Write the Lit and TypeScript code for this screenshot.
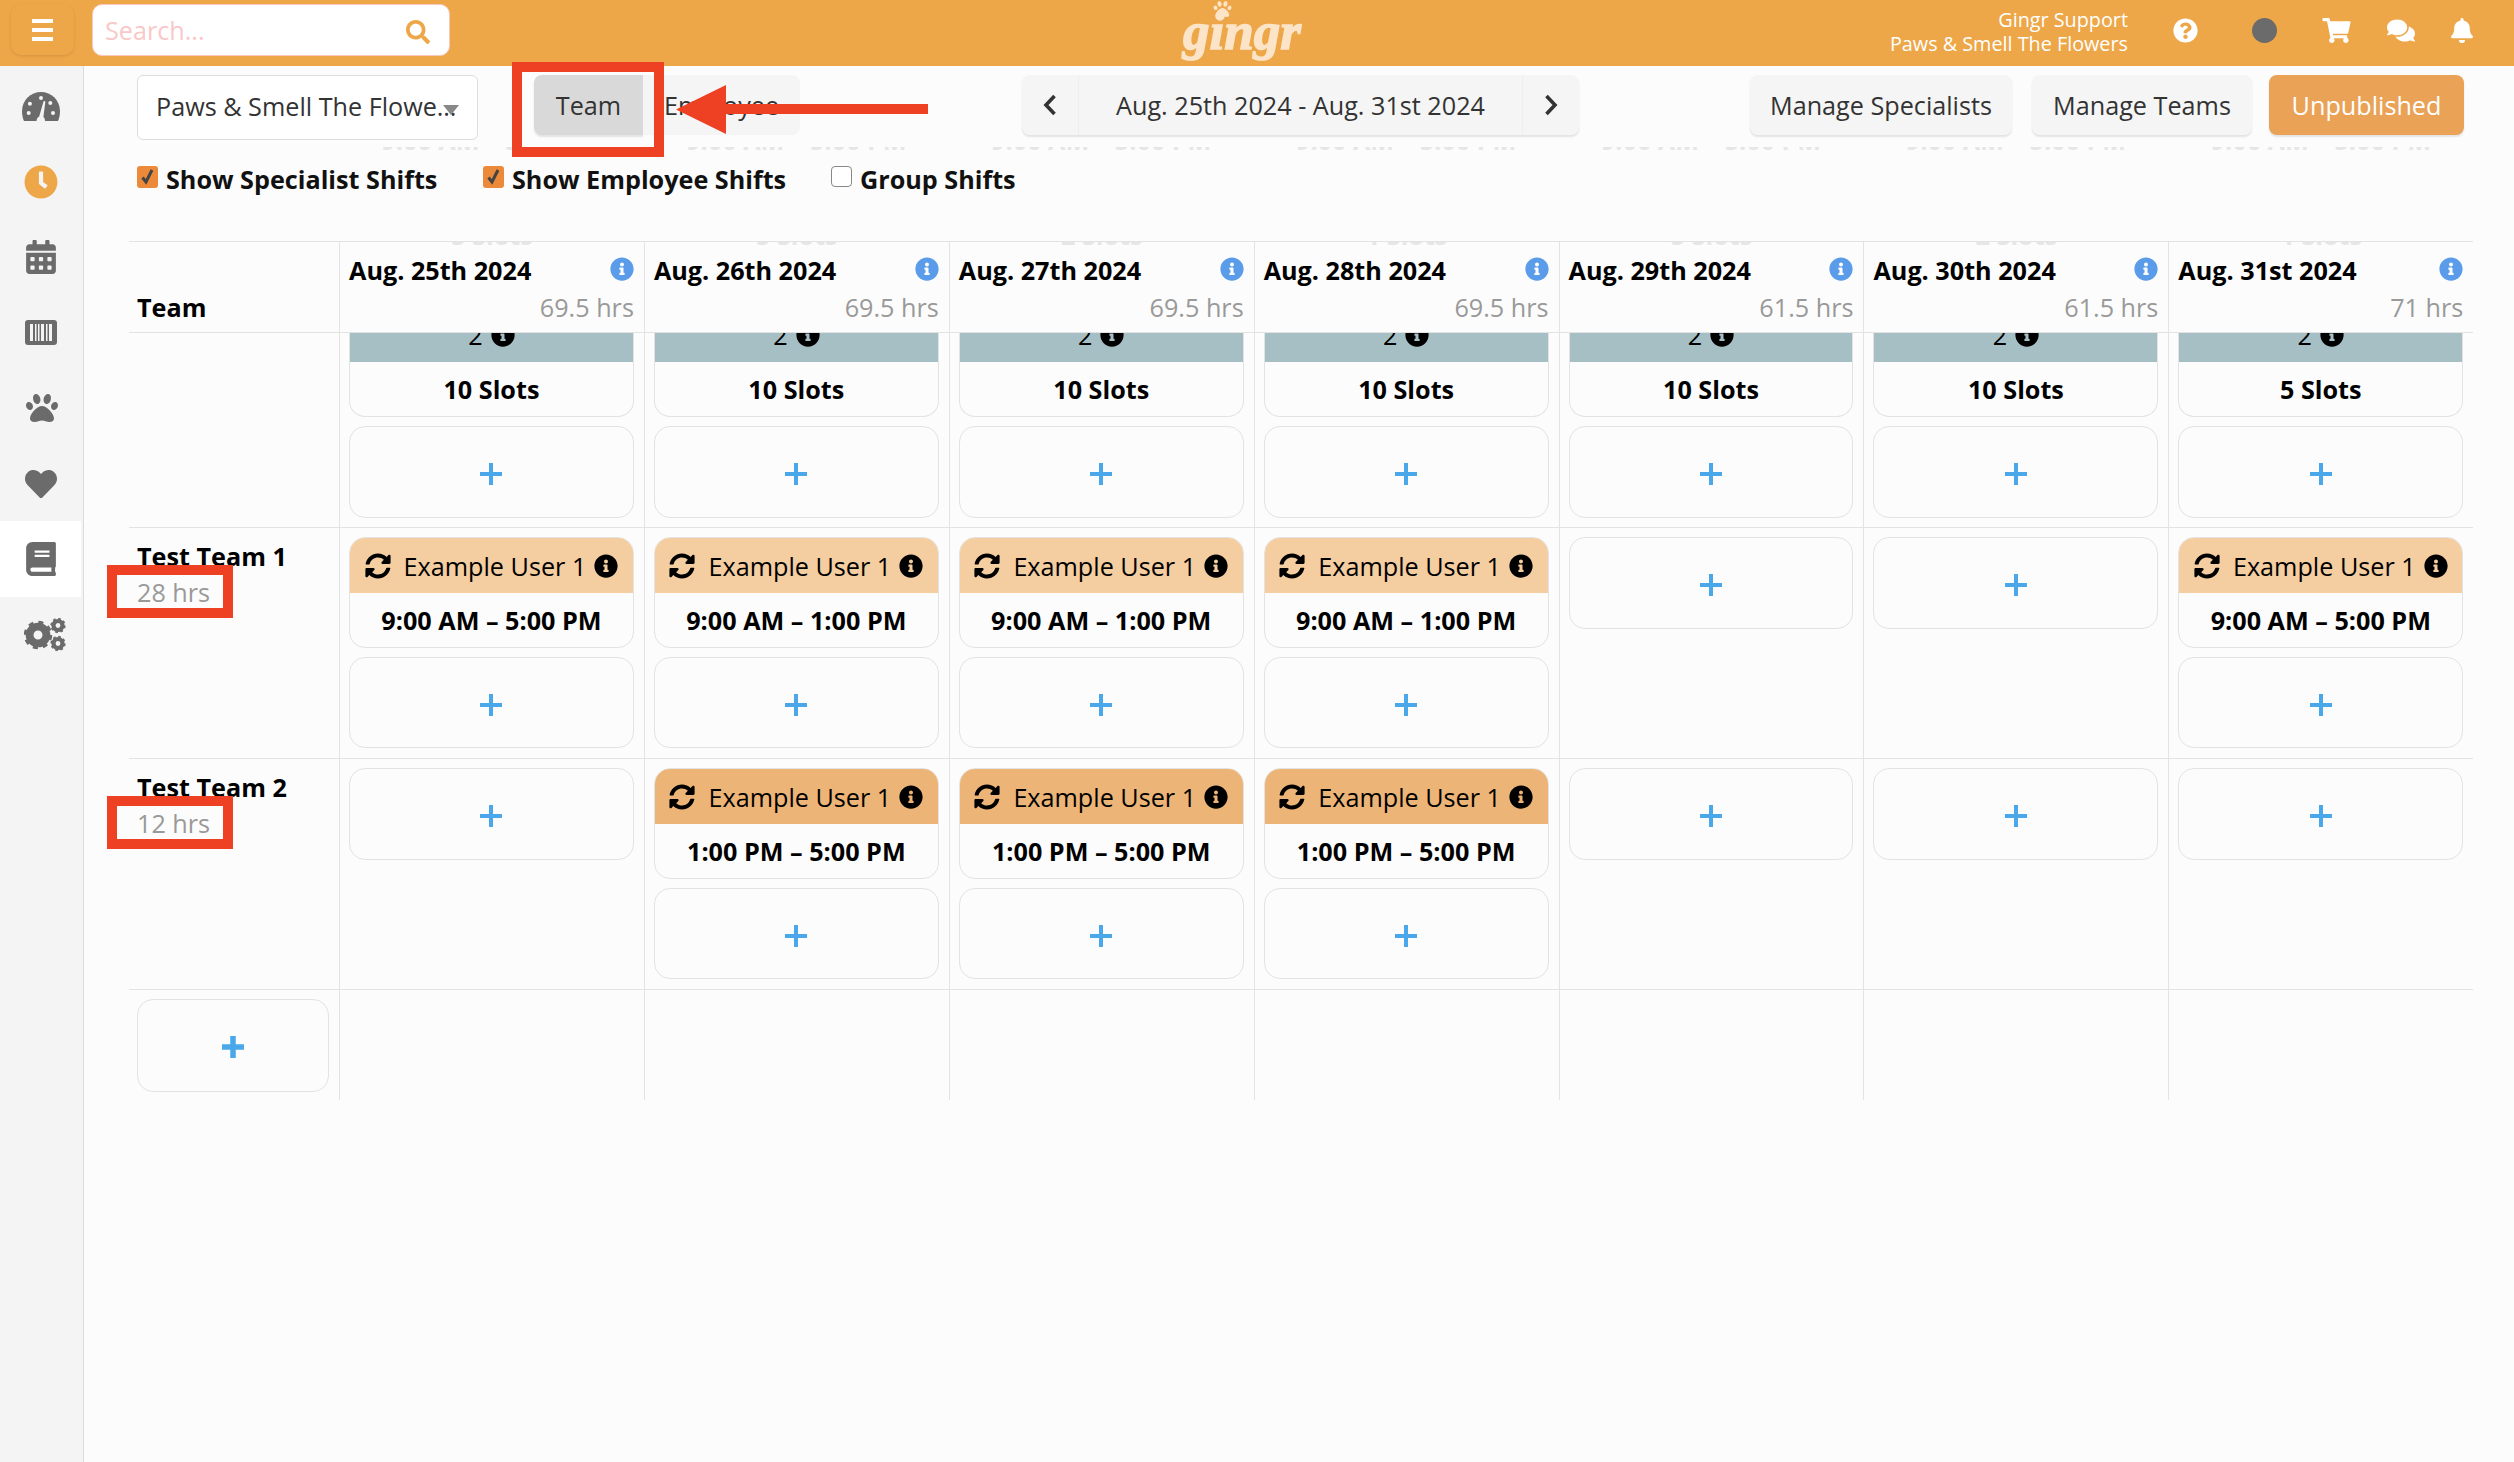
import { LitElement, html, css, svg } from 'lit';
import { customElement } from 'lit/decorators.js';

const icon = (vb: string, d: string, cls = '') =>
  html`<svg class="ic ${cls}" viewBox="${vb}" fill="currentColor"><path d="${d}"></path></svg>`;

const P = {
  sync: 'M370.72 133.28C339.458 104.008 298.888 87.962 255.848 88c-77.458.068-144.328 53.178-162.791 126.85-1.344 5.363-6.122 9.15-11.651 9.15H24.103c-7.498 0-13.194-6.807-11.807-14.176C33.933 94.924 134.813 8 256 8c66.448 0 126.791 26.136 171.315 68.685L463.03 40.97C478.149 25.851 504 36.559 504 57.941V192c0 13.255-10.745 24-24 24H345.941c-21.382 0-32.09-25.851-16.971-40.971l41.75-41.749zM32 296h134.059c21.382 0 32.09 25.851 16.971 40.971l-41.75 41.75c31.262 29.273 71.835 45.319 114.876 45.28 77.418-.07 144.315-53.144 162.787-126.849 1.344-5.363 6.122-9.15 11.651-9.15h57.304c7.498 0 13.194 6.807 11.807 14.176C478.067 417.076 377.187 504 256 504c-66.448 0-126.791-26.136-171.315-68.685L48.97 471.03C33.851 486.149 8 475.441 8 454.059V320c0-13.255 10.745-24 24-24z',
  info: 'M256 8C119.043 8 8 119.083 8 256c0 136.997 111.043 248 248 248s248-111.003 248-248C504 119.083 392.957 8 256 8zm0 110c23.196 0 42 18.804 42 42s-18.804 42-42 42-42-18.804-42-42 18.804-42 42-42zm56 254c0 6.627-5.373 12-12 12h-88c-6.627 0-12-5.373-12-12v-24c0-6.627 5.373-12 12-12h12v-64h-12c-6.627 0-12-5.373-12-12v-24c0-6.627 5.373-12 12-12h64c6.627 0 12 5.373 12 12v100h12c6.627 0 12 5.373 12 12v24z',
  question: 'M504 256c0 136.997-111.043 248-248 248S8 392.997 8 256C8 119.083 119.043 8 256 8s248 111.083 248 248zM262.655 90c-54.497 0-89.255 22.957-116.549 63.758-3.536 5.286-2.353 12.415 2.715 16.258l34.699 26.31c5.205 3.947 12.621 3.008 16.665-2.122 17.864-22.658 30.113-35.797 57.303-35.797 20.429 0 45.698 13.148 45.698 32.958 0 14.976-12.363 22.667-32.534 33.976C247.128 238.528 216 254.941 216 296v4c0 6.627 5.373 12 12 12h56c6.627 0 12-5.373 12-12v-1.333c0-28.462 83.186-29.647 83.186-106.667 0-58.002-60.165-102-116.531-102zM256 338c-25.365 0-46 20.635-46 46 0 25.364 20.635 46 46 46s46-20.636 46-46c0-25.365-20.635-46-46-46z',
  search: 'M505 442.7L405.3 343c-4.5-4.5-10.6-7-17-7H372c27.6-35.3 44-79.7 44-128C416 93.1 322.9 0 208 0S0 93.1 0 208s93.1 208 208 208c48.3 0 92.7-16.4 128-44v16.3c0 6.4 2.5 12.5 7 17l99.7 99.7c9.4 9.4 24.6 9.4 33.9 0l28.3-28.3c9.4-9.4 9.4-24.6.1-34zM208 336c-70.7 0-128-57.2-128-128 0-70.7 57.2-128 128-128 70.7 0 128 57.2 128 128 0 70.7-57.2 128-128 128z',
  cart: 'M528.12 301.319l47.273-208C578.806 78.301 567.391 64 551.99 64H159.208l-9.166-44.81C147.758 8.021 137.93 0 126.529 0H24C10.745 0 0 10.745 0 24v16c0 13.255 10.745 24 24 24h69.883l70.248 343.435C147.325 417.1 136 435.222 136 456c0 30.928 25.072 56 56 56s56-25.072 56-56c0-15.674-6.447-29.835-16.824-40h209.647C430.447 426.165 424 440.326 424 456c0 30.928 25.072 56 56 56s56-25.072 56-56c0-22.172-12.888-41.332-31.579-50.405l5.517-24.276c3.413-15.018-8.002-29.319-23.403-29.319H218.117l-6.545-32h293.145c11.206 0 20.92-7.754 23.403-18.681z',
  bell: 'M224 512c35.32 0 63.97-28.65 63.97-64H160.03c0 35.35 28.65 64 63.97 64zm215.39-149.71c-19.32-20.76-55.47-51.99-55.47-154.29 0-77.7-54.48-139.9-127.94-155.16V32c0-17.67-14.32-32-31.98-32s-31.98 14.33-31.98 32v20.84C118.56 68.1 64.08 130.3 64.08 208c0 102.3-36.15 133.53-55.47 154.29-6 6.45-8.66 14.16-8.61 21.71.11 16.4 12.98 32 32.1 32h383.8c19.12 0 32-15.6 32.1-32 .05-7.55-2.61-15.27-8.61-21.71z',
  comments: 'M416 192c0-88.4-93.1-160-208-160S0 103.6 0 192c0 34.3 14.1 65.9 38 92-13.4 30.2-35.5 54.2-35.8 54.5-2.2 2.3-2.8 5.7-1.5 8.7S4.8 352 8 352c36.6 0 66.9-12.3 88.7-25 32.2 15.7 70.3 25 111.3 25 114.9 0 208-71.6 208-160zm122 220c23.9-26 38-57.7 38-92 0-66.9-53.5-124.2-129.3-148.1.9 6.6 1.3 13.3 1.3 20.1 0 105.9-107.7 192-240 192-10.8 0-21.3-.8-31.7-1.9C207.8 439.6 281.8 480 368 480c41 0 79.1-9.2 111.3-25 21.8 12.7 52.1 25 88.7 25 3.2 0 6.1-1.9 7.3-4.8 1.3-2.9.7-6.3-1.5-8.7-.3-.3-22.4-24.2-35.8-54.5z',
  paw: 'M256 224c-79.41 0-192 122.76-192 200.25 0 34.9 26.81 55.75 71.74 55.75 48.84 0 81.09-25.08 120.26-25.08 39.51 0 71.85 25.08 120.26 25.08 44.93 0 71.74-20.85 71.74-55.75C448 346.76 335.41 224 256 224zm-147.28-12.61c-10.4-34.65-42.44-57.09-71.56-50.13-29.12 6.96-44.29 40.69-33.89 75.34 10.4 34.65 42.44 57.09 71.56 50.13 29.12-6.96 44.29-40.69 33.89-75.34zm84.72-20.78c30.94-8.14 46.42-49.94 34.58-93.36s-46.52-72.01-77.46-63.87-46.42 49.94-34.58 93.36c11.84 43.42 46.52 72.02 77.46 63.87zm281.39-29.34c-29.12-6.96-61.15 15.48-71.56 50.13-10.4 34.65 4.77 68.38 33.89 75.34 29.12 6.96 61.15-15.48 71.56-50.13 10.4-34.65-4.77-68.38-33.89-75.34zm-156.27 29.34c30.94 8.14 65.62-20.45 77.46-63.87 11.84-43.42-3.64-85.21-34.58-93.36s-65.62 20.45-77.46 63.87c-11.84 43.42 3.64 85.22 34.58 93.36z',
  heart: 'M462.3 62.6C407.5 15.9 326 24.3 275.7 76.2L256 96.5l-19.7-20.3C186.1 24.3 104.5 15.9 49.7 62.6c-62.8 53.6-66.1 149.8-9.9 207.9l193.5 199.8c12.5 12.9 32.8 12.9 45.3 0l193.5-199.8c56.3-58.1 53-154.3-9.8-207.9z',
  book: 'M448 360V24c0-13.3-10.7-24-24-24H96C43 0 0 43 0 96v320c0 53 43 96 96 96h328c13.3 0 24-10.7 24-24v-16c0-7.5-3.5-14.3-8.9-18.7-4.2-15.4-4.2-59.3 0-74.7 5.4-4.3 8.9-11.1 8.9-18.6zM128 134c0-3.3 2.7-6 6-6h212c3.3 0 6 2.7 6 6v20c0 3.3-2.7 6-6 6H134c-3.3 0-6-2.7-6-6v-20zm0 64c0-3.3 2.7-6 6-6h212c3.3 0 6 2.7 6 6v20c0 3.3-2.7 6-6 6H134c-3.3 0-6-2.7-6-6v-20zm253.4 250H96c-17.7 0-32-14.3-32-32 0-17.6 14.4-32 32-32h285.4c-1.9 17.1-1.9 46.9 0 64z',
  calendar: 'M0 464c0 26.5 21.5 48 48 48h352c26.5 0 48-21.5 48-48V192H0v272zm320-196c0-6.6 5.4-12 12-12h40c6.6 0 12 5.4 12 12v40c0 6.6-5.4 12-12 12h-40c-6.6 0-12-5.4-12-12v-40zm0 128c0-6.6 5.4-12 12-12h40c6.6 0 12 5.4 12 12v40c0 6.6-5.4 12-12 12h-40c-6.6 0-12-5.4-12-12v-40zM192 268c0-6.6 5.4-12 12-12h40c6.6 0 12 5.4 12 12v40c0 6.6-5.4 12-12 12h-40c-6.6 0-12-5.4-12-12v-40zm0 128c0-6.6 5.4-12 12-12h40c6.6 0 12 5.4 12 12v40c0 6.6-5.4 12-12 12h-40c-6.6 0-12-5.4-12-12v-40zM64 268c0-6.6 5.4-12 12-12h40c6.6 0 12 5.4 12 12v40c0 6.6-5.4 12-12 12H76c-6.6 0-12-5.4-12-12v-40zm0 128c0-6.6 5.4-12 12-12h40c6.6 0 12 5.4 12 12v40c0 6.6-5.4 12-12 12H76c-6.6 0-12-5.4-12-12v-40zM400 64h-48V16c0-8.8-7.2-16-16-16h-32c-8.8 0-16 7.2-16 16v48H160V16c0-8.8-7.2-16-16-16h-32c-8.8 0-16 7.2-16 16v48H48C21.5 64 0 85.5 0 112v48h448v-48c0-26.5-21.5-48-48-48z',
  clock: 'M256,8C119,8,8,119,8,256S119,504,256,504,504,393,504,256,393,8,256,8Zm92.49,313h0l-20,25a16,16,0,0,1-22.49,2.5h0l-67-49.72a40,40,0,0,1-15-31.23V112a16,16,0,0,1,16-16h32a16,16,0,0,1,16,16V256l58,42.5A16,16,0,0,1,348.49,321Z',
};

const gauge = html`<svg class="ic gauge" viewBox="0 0 38 29">
  <path fill="currentColor" d="M2 29C.6 26 0 22.5 0 19a19 19 0 0 1 38 0c0 3.5-.6 7-2 10z"></path>
  <g fill="#f4f4f4">
    <circle cx="6.7" cy="21" r="2"></circle><circle cx="7.9" cy="11.7" r="2"></circle>
    <circle cx="19" cy="6" r="2"></circle><circle cx="28.3" cy="11" r="2"></circle>
    <circle cx="31" cy="21" r="2"></circle>
    <path d="M14.5 29c.2-2 1-3.6 2.7-4.5L21.5 9.5c.3-1 2-.6 1.8.4l-1.9 15c1.2 1 1.6 2.500 1.6 4.100z"></path>
  </g>
</svg>`;

const barcode = html`<svg class="ic barcode" viewBox="0 0 32 25">
  <rect width="32" height="25" rx="3" fill="currentColor"></rect>
  <g fill="#f4f4f4">
    <rect x="5" y="4" width="3" height="17"></rect><rect x="10" y="4" width="1.500" height="17"></rect>
    <rect x="13" y="4" width="1.500" height="17"></rect><rect x="16" y="4" width="3" height="17"></rect>
    <rect x="21" y="4" width="1.500" height="17"></rect><rect x="24" y="4" width="3" height="17"></rect>
  </g>
</svg>`;

const gear = (x: number, y: number, r: number) => svg`
  <circle cx="${x}" cy="${y}" r="${r * 0.6}" fill="none" stroke="currentColor" stroke-width="${r * 0.56}"></circle>
  <circle cx="${x}" cy="${y}" r="${r * 0.88}" fill="none" stroke="currentColor" stroke-width="${r * 0.28}"
    stroke-dasharray="${(r * 0.88 * 2 * Math.PI) / 16} ${(r * 0.88 * 2 * Math.PI) / 16}"></circle>`;

const gears = html`<svg class="ic gears" viewBox="0 0 42 33">
  ${gear(14, 17, 14)} ${gear(34, 7.5, 7.5)} ${gear(34, 25.5, 7.5)}
</svg>`;

const plus = html`<svg class="plus" viewBox="0 0 22 22"><path d="M9 0h4v9h9v4h-9v9H9v-9H0V9h9z"></path></svg>`;
const chevLeft = html`<svg class="chev" viewBox="0 0 14 22"><path d="M11.500 2 3 11l8.500 9" fill="none" stroke="currentColor" stroke-width="3.600"></path></svg>`;
const chevRight = html`<svg class="chev" viewBox="0 0 14 22"><path d="M2.500 2 11 11l-8.500 9" fill="none" stroke="currentColor" stroke-width="3.600"></path></svg>`;
const check = html`<svg viewBox="0 0 21 22"><path d="M5.500 11.500 9 16l6-12" fill="none" stroke="#444" stroke-width="3"></path></svg>`;

const days = [
  { date: 'Aug. 25th 2024', hrs: '69.5 hrs', slots: '10 Slots', ghost: '5 Slots' },
  { date: 'Aug. 26th 2024', hrs: '69.5 hrs', slots: '10 Slots', ghost: '5 Slots' },
  { date: 'Aug. 27th 2024', hrs: '69.5 hrs', slots: '10 Slots', ghost: '2 Slots' },
  { date: 'Aug. 28th 2024', hrs: '69.5 hrs', slots: '10 Slots', ghost: '1 Slots' },
  { date: 'Aug. 29th 2024', hrs: '61.5 hrs', slots: '10 Slots', ghost: '5 Slots' },
  { date: 'Aug. 30th 2024', hrs: '61.5 hrs', slots: '10 Slots', ghost: '2 Slots' },
  { date: 'Aug. 31st 2024', hrs: '71 hrs', slots: '5 Slots', ghost: '1 Slots' },
];

const teams = [
  {
    name: 'Test Team 1',
    hrs: '28 hrs',
    tone: 'light',
    shifts: ['9:00 AM – 5:00 PM', '9:00 AM – 1:00 PM', '9:00 AM – 1:00 PM', '9:00 AM – 1:00 PM', '', '', '9:00 AM – 5:00 PM'],
  },
  {
    name: 'Test Team 2',
    hrs: '12 hrs',
    tone: 'dark',
    shifts: ['', '1:00 PM – 5:00 PM', '1:00 PM – 5:00 PM', '1:00 PM – 5:00 PM', '', '', ''],
  },
];

@customElement('app-root')
export class AppRoot extends LitElement {
  static styles = css`
    :host {
      display: block;
      position: relative;
      width: 2514px;
      height: 1462px;
      overflow: hidden;
      background: #fcfcfc;
      color: #333;
      font-family: 'Open Sans', sans-serif;
      font-size: 25.2px;
    }
    * {
      box-sizing: border-box;
    }
    .ic {
      display: block;
      flex: none;
    }

    .top {
      display: flex;
      align-items: center;
      height: 66px;
      background: #eea748;
      color: #fff;
    }
    .burger {
      display: flex;
      flex-direction: column;
      justify-content: center;
      gap: 5px;
      width: 63px;
      height: 51px;
      margin: -7px 0 0 11px;
      padding: 0 21px;
      border-radius: 10px;
      box-shadow: 0 1px 3px rgba(0, 0, 0, 0.12);
    }
    .burger i {
      display: block;
      height: 4px;
      background: #fff;
    }
    .search {
      display: flex;
      align-items: center;
      justify-content: space-between;
      width: 358px;
      height: 52px;
      margin: -6px 0 0 18px;
      padding: 0 19px 0 12px;
      background: #fff;
      border: 1px solid #f9c9bd;
      border-radius: 10px;
      color: #f9c8c8;
    }
    .search .ic {
      width: 24px;
      height: 24px;
      margin-top: 3px;
      color: #eea748;
    }
    .logo {
      position: relative;
      align-self: flex-start;
      width: 118px;
      margin-left: 733px;
      text-align: center;
      color: #fbe4c8;
      font-family: 'Liberation Serif', serif;
      font-style: italic;
      font-weight: 700;
      font-size: 53px;
      line-height: 62px;
      -webkit-text-stroke: 1.5px #fbe4c8;
      white-space: nowrap;
    }
    .logo .ic {
      position: absolute;
      left: 30px;
      top: 0;
      width: 19px;
      height: 18px;
    }
    .who {
      width: 300px;
      margin: -3px 0 0 527px;
      text-align: right;
      font-size: 19.8px;
      line-height: 24px;
    }
    .q {
      width: 25px;
      height: 25px;
      margin: -5px 0 0 45px;
    }
    .dot {
      width: 25px;
      height: 25px;
      margin: -5px 0 0 54px;
      border-radius: 50%;
      background: #6b6b6b;
    }
    .cart {
      width: 29px;
      height: 25px;
      margin: -5px 0 0 45px;
    }
    .chat {
      width: 28px;
      height: 25px;
      margin: -5px 0 0 36px;
    }
    .bell {
      width: 22px;
      height: 25px;
      margin: -5px 0 0 36px;
    }

    .body {
      display: flex;
      height: 1396px;
    }
    .side {
      flex: none;
      width: 84px;
      padding-top: 3px;
      background: #f4f4f4;
      border-right: 1px solid #dcdcdc;
      color: #6b6b6b;
    }
    .nav {
      display: flex;
      align-items: center;
      justify-content: center;
      width: 81px;
      height: 75.4px;
    }
    .nav.on {
      background: #fff;
    }
    .gauge {
      width: 38px;
      height: 29px;
    }
    .clock {
      width: 34px;
      height: 34px;
      color: #eea748;
    }
    .cal {
      width: 30px;
      height: 34px;
    }
    .barcode {
      width: 32px;
      height: 25px;
    }
    .paw {
      width: 34px;
      height: 32px;
      margin-left: 3px;
    }
    .heart {
      width: 34px;
      height: 32px;
    }
    .book {
      width: 30px;
      height: 34px;
    }
    .gears {
      width: 42px;
      height: 33px;
      margin-left: 9px;
    }

    .main {
      flex: 1;
      min-width: 0;
      padding: 9px 0 0 45px;
    }
    .bar {
      display: flex;
      align-items: flex-start;
      height: 60px;
      padding-left: 8px;
    }
    .select {
      display: flex;
      align-items: center;
      width: 341px;
      height: 65px;
      padding: 0 0 3px 18px;
      background: #fff;
      border: 1px solid #ddd;
      border-radius: 6px;
    }
    .select span {
      width: 302px;
      overflow: hidden;
      white-space: nowrap;
      text-overflow: ellipsis;
    }
    .select i {
      flex: none;
      width: 0;
      height: 0;
      margin-left: -15px;
      margin-top: 8px;
      border-left: 8px solid transparent;
      border-right: 8px solid transparent;
      border-top: 10px solid #888;
    }
    .btn {
      display: flex;
      align-items: center;
      justify-content: center;
      height: 60px;
      background: #f5f5f5;
      border-radius: 8px;
      box-shadow: 0 2px 2px rgba(0, 0, 0, 0.1);
      white-space: nowrap;
    }
    .seg1 {
      width: 109px;
      margin-left: 56px;
      background: #d9d9d9;
      border-radius: 8px 0 0 8px;
    }
    .seg2 {
      width: 157px;
      border-radius: 0 8px 8px 0;
      box-shadow: none;
    }
    .dates {
      display: flex;
      width: 557px;
      height: 60px;
      margin-left: 222px;
      background: #f5f5f5;
      border-radius: 8px;
      box-shadow: 0 2px 2px rgba(0, 0, 0, 0.1);
    }
    .dates .arrow {
      display: flex;
      align-items: center;
      justify-content: center;
      width: 56px;
      flex: none;
    }
    .dates .range {
      flex: 1;
      text-align: center;
      line-height: 60px;
      border-left: 1px solid #eee;
      border-right: 1px solid #eee;
      white-space: nowrap;
    }
    .chev {
      width: 14px;
      height: 22px;
      color: #333;
    }
    .ms {
      width: 262px;
      margin-left: 171px;
    }
    .mt {
      width: 220px;
      margin-left: 20px;
    }
    .pub {
      width: 195px;
      margin-left: 17px;
      background: #e9a256;
      color: #fff;
    }

    .strip {
      display: grid;
      grid-template-columns: 210px repeat(7, 304.9px);
      height: 3px;
      margin-top: 12px;
      overflow: hidden;
      color: #e6e6e6;
      font-weight: 700;
      line-height: 36px;
      text-align: center;
    }
    .strip div {
      margin-top: -25px;
      white-space: nowrap;
    }

    .checks {
      display: flex;
      align-items: center;
      height: 30px;
      margin-top: 14px;
      padding-left: 8px;
      color: #111;
      font-weight: 700;
    }
    .chk {
      display: flex;
      align-items: center;
      gap: 8px;
      white-space: nowrap;
    }
    .chk.a {
      width: 346px;
    }
    .chk.b {
      width: 348px;
    }
    .box {
      flex: none;
      width: 21px;
      height: 22px;
      margin-top: -5px;
      background: #ec8a3a;
      border-radius: 3px;
    }
    .box svg {
      display: block;
    }
    .box.off {
      width: 21px;
      height: 21px;
      background: #fff;
      border: 1px solid #888;
      border-radius: 4px;
    }

    .grid {
      display: grid;
      grid-template-columns: 210px repeat(7, 304.9px);
      grid-template-rows: 91px 195px 231px 231px 111px;
      margin-top: 47px;
    }
    .cell {
      position: relative;
      min-width: 0;
      border-top: 1px solid #e3e3e3;
      border-left: 1px solid #e3e3e3;
      padding: 9px 10px 0 9px;
    }
    .cell.first {
      border-left: none;
      padding: 10px 0 0 8px;
      line-height: 36px;
      color: #000;
      font-weight: 700;
    }
    .cell.first.team-head {
      padding-top: 47px;
    }
    .cell.tall {
      padding-top: 0;
    }
    .muted {
      color: #999;
      font-weight: 400;
    }
    .head {
      padding: 10px 10px 0 9px;
      line-height: 36px;
    }
    .head .dt {
      display: flex;
      align-items: center;
      justify-content: space-between;
      color: #000;
      font-weight: 700;
      white-space: nowrap;
    }
    .head .dt .ic {
      width: 24px;
      height: 24px;
      margin-top: -3px;
      color: #5b9cea;
    }
    .head .muted {
      margin-top: 1px;
      text-align: right;
    }
    .ghost {
      position: absolute;
      left: 0;
      right: 0;
      top: 0;
      height: 3px;
      overflow: hidden;
      text-align: center;
      color: #e6e6e6;
      font-weight: 700;
    }
    .ghost div {
      margin-top: -25px;
    }

    .card {
      overflow: hidden;
      background: #fcfcfc;
      border: 1px solid #e3e3e3;
      border-radius: 16px;
    }
    .card.clip {
      border-top: none;
      border-radius: 0 0 16px 16px;
    }
    .band {
      display: flex;
      justify-content: center;
      gap: 8px;
      height: 29px;
      overflow: hidden;
      background: #a5bfc5;
      color: #000;
      line-height: 24px;
    }
    .band > * {
      margin-top: -10px;
    }
    .band .ic {
      width: 24px;
      height: 24px;
    }
    .slots,
    .time {
      height: 54px;
      text-align: center;
      line-height: 54px;
      color: #000;
      font-weight: 700;
      white-space: nowrap;
    }
    .who-row {
      display: flex;
      align-items: center;
      justify-content: center;
      gap: 8px;
      height: 55px;
      color: #000;
      white-space: nowrap;
    }
    .who-row.light {
      background: #f4cda1;
    }
    .who-row.dark {
      background: #edb477;
    }
    .who-row .sync {
      width: 26px;
      height: 26px;
      margin-right: 5px;
    }
    .who-row .inf {
      width: 24px;
      height: 24px;
    }
    .add {
      display: flex;
      align-items: center;
      justify-content: center;
      height: 91px;
      margin-top: 9px;
      padding-top: 4px;
      border: 1px solid #e3e3e3;
      border-radius: 16px;
    }
    .tall .add {
      height: 92px;
    }
    .add.lone {
      height: 92px;
      margin-top: 0;
    }
    .add.team {
      width: 192px;
      height: 93px;
      margin: 0;
      padding-top: 2px;
    }
    .plus {
      width: 22px;
      height: 22px;
      fill: #4aa8ea;
    }
    .team .plus {
      stroke: #4aa8ea;
      stroke-width: 1.500;
    }
    .cell.first.last {
      padding: 9px 0 0 8px;
    }

    .mark {
      position: absolute;
      border: 10px solid #ee4023;
    }
    .mark.t {
      left: 512px;
      top: 62px;
      width: 152px;
      height: 95px;
    }
    .mark.h1 {
      left: 107px;
      top: 565px;
      width: 126px;
      height: 53px;
    }
    .mark.h2 {
      left: 107px;
      top: 796px;
      width: 126px;
      height: 53px;
    }
    .pointer {
      position: absolute;
      left: 676px;
      top: 85px;
      width: 252px;
      height: 49px;
      fill: #ee4023;
    }
  `;

  render() {
    return html`
      <div class="top">
        <div class="burger"><i></i><i></i><i></i></div>
        <div class="search">Search...${icon('0 0 512 512', P.search)}</div>
        <div class="logo">${icon('0 0 512 512', P.paw)}gingr</div>
        <div class="who">Gingr Support<br />Paws &amp; Smell The Flowers</div>
        ${icon('0 0 512 512', P.question, 'q')}
        <div class="dot"></div>
        ${icon('0 0 576 512', P.cart, 'cart')}
        ${icon('0 0 576 512', P.comments, 'chat')}
        ${icon('0 0 448 512', P.bell, 'bell')}
      </div>
      <div class="body">
        <div class="side">
          <div class="nav">${gauge}</div>
          <div class="nav">${icon('0 0 512 512', P.clock, 'clock')}</div>
          <div class="nav">${icon('0 0 448 512', P.calendar, 'cal')}</div>
          <div class="nav">${barcode}</div>
          <div class="nav">${icon('0 0 512 512', P.paw, 'paw')}</div>
          <div class="nav">${icon('0 0 512 512', P.heart, 'heart')}</div>
          <div class="nav on">${icon('0 0 448 512', P.book, 'book')}</div>
          <div class="nav">${gears}</div>
        </div>
        <div class="main">
          <div class="bar">
            <div class="select"><span>Paws &amp; Smell The Flowers</span><i></i></div>
            <div class="btn seg1">Team</div>
            <div class="btn seg2">Employee</div>
            <div class="dates">
              <div class="arrow">${chevLeft}</div>
              <div class="range">Aug. 25th 2024 - Aug. 31st 2024</div>
              <div class="arrow">${chevRight}</div>
            </div>
            <div class="btn ms">Manage Specialists</div>
            <div class="btn mt">Manage Teams</div>
            <div class="btn pub">Unpublished</div>
          </div>
          <div class="strip">
            <span></span>
            ${days.map(() => html`<div>9:00 AM – 5:00 PM</div>`)}
          </div>
          <div class="checks">
            <label class="chk a"><span class="box">${check}</span>Show Specialist Shifts</label>
            <label class="chk b"><span class="box">${check}</span>Show Employee Shifts</label>
            <label class="chk"><span class="box off"></span>Group Shifts</label>
          </div>
          <div class="grid">
            <div class="cell first team-head">Team</div>
            ${days.map(
              (d) => html`<div class="cell head">
                <div class="ghost"><div>${d.ghost}</div></div>
                <div class="dt">${d.date}${icon('0 0 512 512', P.info)}</div>
                <div class="muted">${d.hrs}</div>
              </div>`
            )}

            <div class="cell first"></div>
            ${days.map(
              (d) => html`<div class="cell tall">
                <div class="card clip">
                  <div class="band"><span>2</span>${icon('0 0 512 512', P.info)}</div>
                  <div class="slots">${d.slots}</div>
                </div>
                <div class="add">${plus}</div>
              </div>`
            )}
            ${teams.map(
              (t) => html`
                <div class="cell first">${t.name}<div class="muted">${t.hrs}</div></div>
                ${t.shifts.map((s) =>
                  s
                    ? html`<div class="cell">
                        <div class="card">
                          <div class="who-row ${t.tone}">
                            ${icon('0 0 512 512', P.sync, 'sync')}<span>Example User 1</span>${icon('0 0 512 512', P.info, 'inf')}
                          </div>
                          <div class="time">${s}</div>
                        </div>
                        <div class="add">${plus}</div>
                      </div>`
                    : html`<div class="cell"><div class="add lone">${plus}</div></div>`
                )}
              `
            )}

            <div class="cell first last"><div class="add team">${plus}</div></div>
            ${days.map(() => html`<div class="cell"></div>`)}
          </div>
        </div>
      </div>

      <div class="mark t"></div>
      <div class="mark h1"></div>
      <div class="mark h2"></div>
      <svg class="pointer" viewBox="0 0 252 49"><path d="M0 24.500 50 0v19h202v10H50v20z"></path></svg>
    `;
  }
}
